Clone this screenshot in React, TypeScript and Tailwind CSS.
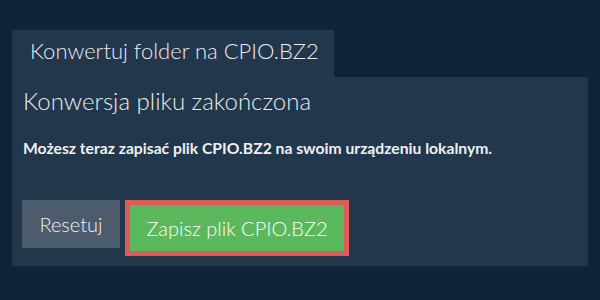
import React from "react";

export default function App() {
  return (
    <div
      className="w-[600px] h-[300px] bg-[#11233a] pt-[30px] px-[12px]"
      style={{ fontFamily: "Lato, 'Open Sans', sans-serif" }}
    >
      <div className="w-[322px] h-[47px] bg-[#22364c] pl-[18px] pt-[8px] text-[22px] font-light leading-[1.2] whitespace-nowrap text-[#e8ecef]">
        Konwertuj folder na CPIO.BZ2
      </div>
      <div className="h-[189px] bg-[#22364c] pt-[10px] px-[11px] flex flex-col">
        <h2 className="text-[24px] font-light leading-[1.2] text-[#e8ecef]">Konwersja pliku zakończona</h2>
        <p className="mt-[23px] text-[15.7px] leading-[1.2] font-bold text-[#eef1f3]">
          Możesz teraz zapisać plik CPIO.BZ2 na swoim urządzeniu lokalnym.
        </p>
        <div className="mt-[42px] flex items-start gap-[5px] ml-[-1px]">
          <button className="w-[98px] h-[48px] bg-[#4c5c6d] text-[20px] font-light text-[#eef1f3]">
            Resetuj
          </button>
          <button className="w-[224px] h-[56px] border-[5px] border-[#dc5c5c] bg-[#5cb85c] text-[20px] font-light text-white">
            Zapisz plik CPIO.BZ2
          </button>
        </div>
      </div>
    </div>
  );
}
